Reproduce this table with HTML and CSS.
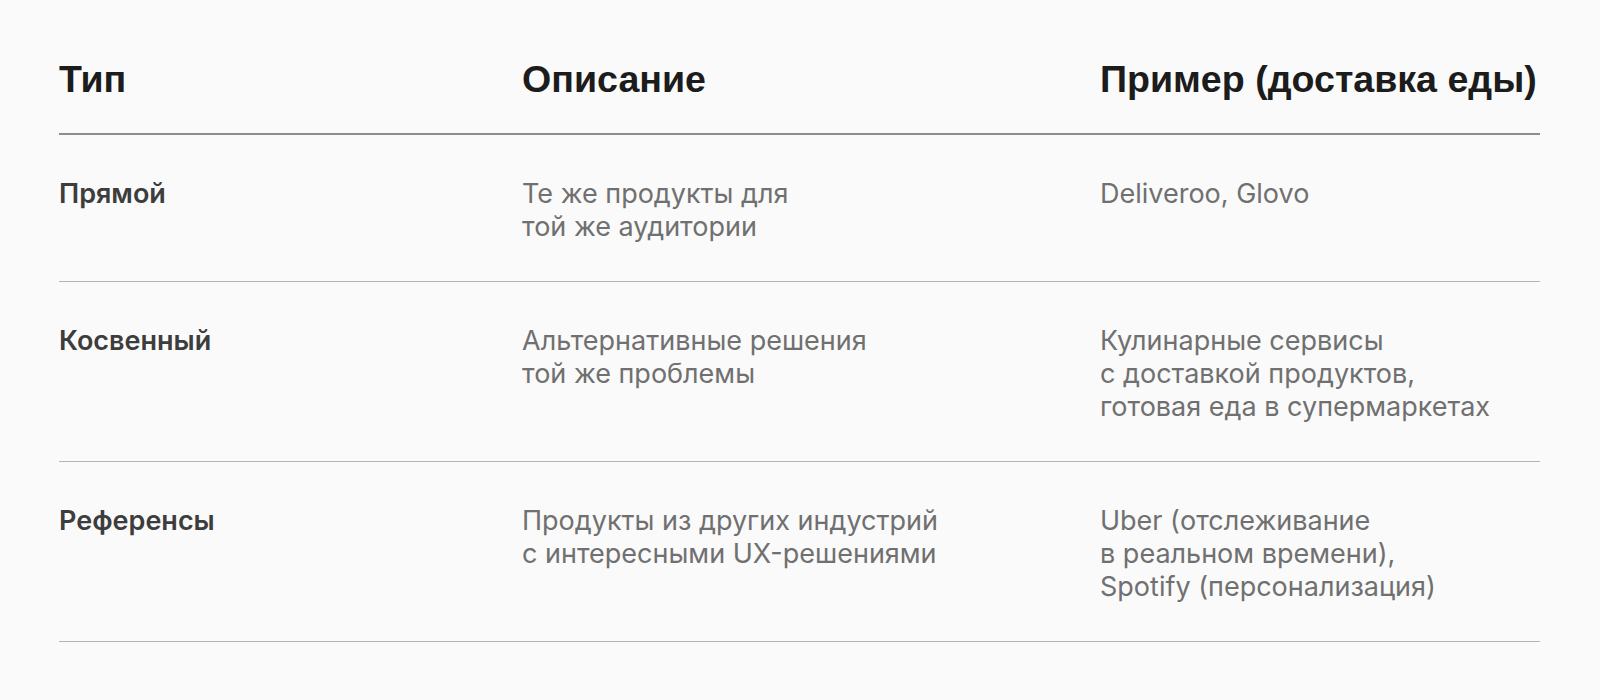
FILE: index.html
```html
<!DOCTYPE html>
<html lang="ru">
<head>
<meta charset="utf-8">
<title>Типы конкурентов</title>
<link rel="stylesheet" href="styles.css">
</head>
<body>
<div class="table">
  <div class="row head">
    <div class="cell">Тип</div>
    <div class="cell">Описание</div>
    <div class="cell">Пример (доставка еды)</div>
  </div>
  <div class="row">
    <div class="cell label">Прямой</div>
    <div class="cell text">Те же продукты для<br>той же аудитории</div>
    <div class="cell text">Deliveroo, Glovo</div>
  </div>
  <div class="row">
    <div class="cell label">Косвенный</div>
    <div class="cell text">Альтернативные решения<br>той же проблемы</div>
    <div class="cell text">Кулинарные сервисы<br>с доставкой продуктов,<br>готовая еда в супермаркетах</div>
  </div>
  <div class="row">
    <div class="cell label">Референсы</div>
    <div class="cell text">Продукты из других индустрий<br>с интересными UX-решениями</div>
    <div class="cell text">Uber (отслеживание<br>в реальном времени),<br>Spotify (персонализация)</div>
  </div>
</div>
</body>
</html>
```

FILE: styles.css
```css
html, body {
  margin: 0;
  padding: 0;
  background: #fafafa;
}
body {
  font-family: Inter, "Noto Sans", sans-serif;
  width: 1600px;
  height: 700px;
  overflow: hidden;
}
.table {
  margin: 57px 60px 0 59px;
  display: flex;
  flex-direction: column;
}
.row {
  display: grid;
  grid-template-columns: 463px 578px 1fr;
  border-bottom: 1px solid #b4b4b4;
  padding: 42px 0 38px;
}
.head {
  padding: 0 0 32px;
  border-bottom: 2px solid #8c8c8c;
  font-family: "Liberation Sans", Arial, sans-serif;
  font-weight: 700;
  font-size: 37.6px;
  line-height: 44px;
  color: #1c1c1c;
  white-space: nowrap;
}
.label {
  font-size: 27px;
  line-height: 33px;
  font-weight: 600;
  color: #3d3d3d;
}
.text {
  font-size: 27px;
  line-height: 33px;
  font-weight: 400;
  color: #707070;
}
```
